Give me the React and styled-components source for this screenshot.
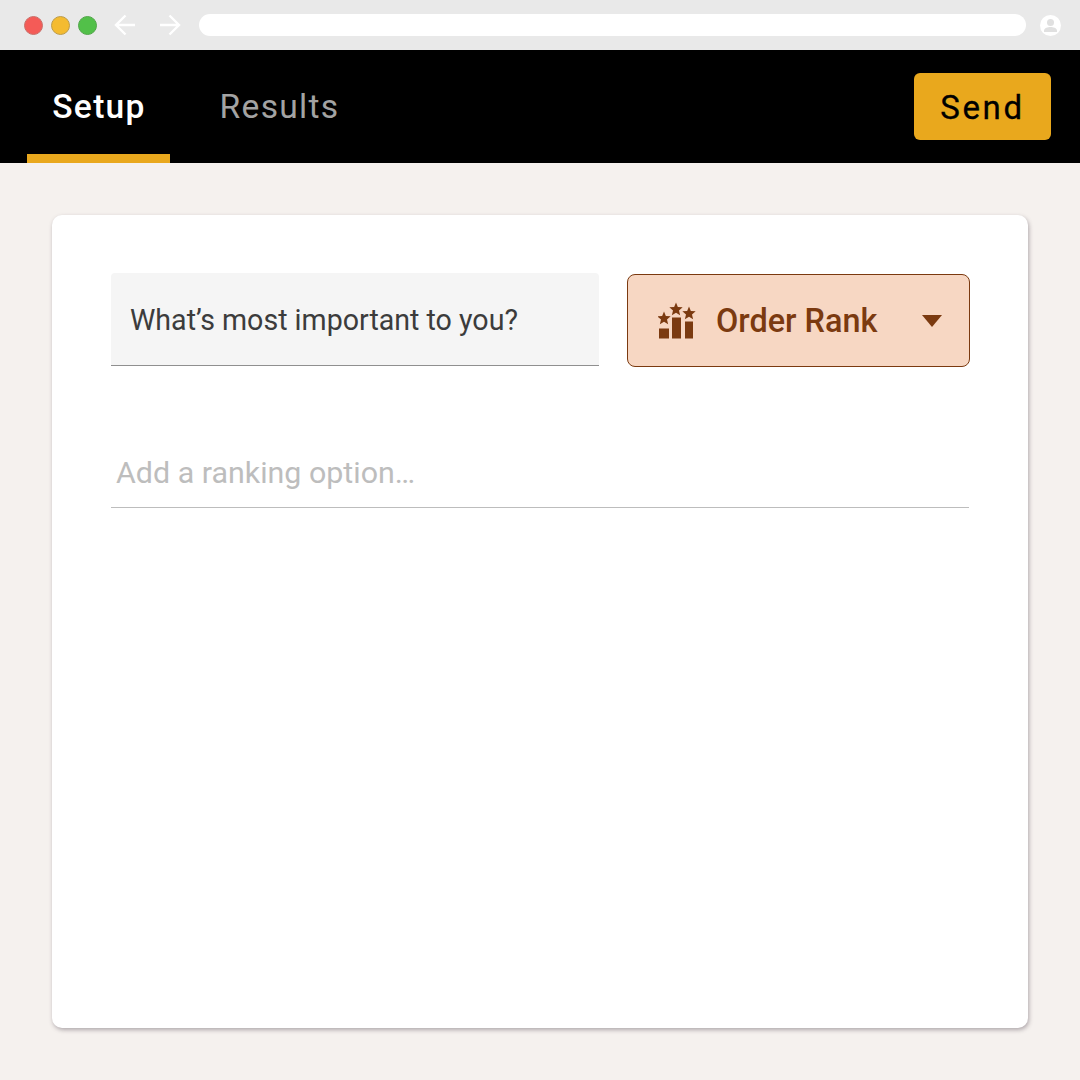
import React from 'react'
import styled, { createGlobalStyle } from 'styled-components'

const GlobalStyle = createGlobalStyle`
    html, body {
        margin: 0;
        padding: 0;
        background: #f5f1ee;
        font-family: Roboto, "Liberation Sans", sans-serif;
    }
`

const Page = styled.div`
    width: 1080px;
    height: 1080px;
    display: flex;
    flex-direction: column;
    overflow: hidden;
    background: #f5f1ee;
`

const BrowserBar = styled.div`
    height: 50px;
    display: flex;
    align-items: center;
    padding: 0 19px 0 24px;
    box-sizing: border-box;
    background: #e9e9e9;
`

const Dot = styled.span`
    width: 19px;
    height: 19px;
    margin-right: 8px;
    border-radius: 50%;
    box-sizing: border-box;
    background: ${({ $color }) => $color};
    border: 1px solid ${({ $edge }) => $edge};
`

const NavArrows = styled.div`
    display: flex;
    gap: 23px;
    margin: 0 18px 0 9px;
`

const UrlBar = styled.div`
    flex: 1;
    height: 22px;
    border-radius: 11px;
    background: #fff;
`

const Account = styled.svg`
    width: 21px;
    height: 21px;
    margin-left: 14px;
`

const Header = styled.header`
    height: 113px;
    display: flex;
    justify-content: space-between;
    align-items: center;
    padding: 0 29px 0 27px;
    box-sizing: border-box;
    background: #000;
`

const Tabs = styled.nav`
    height: 100%;
    display: flex;
    gap: 25px;
`

const Tab = styled.div`
    width: ${({ $width }) => $width}px;
    height: 100%;
    display: flex;
    justify-content: center;
    align-items: center;
    padding: 8px 0 0 1px;
    box-sizing: border-box;
    font-size: 33.6px;
    font-weight: ${({ $active }) => ($active ? 500 : 400)};
    letter-spacing: 1.3px;
    color: ${({ $active }) => ($active ? '#fff' : '#a3a3a3')};
    border-bottom: 9px solid ${({ $active }) => ($active ? '#e9a81d' : 'transparent')};
`

const SendButton = styled.button`
    width: 137px;
    height: 67px;
    padding: 2px 0 0;
    border: none;
    border-radius: 6px;
    background: #e9a81d;
    color: #000;
    font-family: inherit;
    font-size: 33px;
    font-weight: 400;
    letter-spacing: 2.6px;
    -webkit-text-stroke: 0.3px #000;
`

const Content = styled.main`
    flex: 1;
    padding: 52px 52px;
`

const Card = styled.section`
    height: 813px;
    padding: 58px 59px;
    box-sizing: border-box;
    border-radius: 10px;
    background: #fff;
    box-shadow: 1px 2px 4px rgba(90, 80, 90, 0.45);
`

const TopRow = styled.div`
    display: flex;
    gap: 28px;
`

const Question = styled.div`
    flex: none;
    width: 488px;
    height: 93px;
    display: flex;
    align-items: center;
    padding: 2px 0 0 19px;
    box-sizing: border-box;
    border-radius: 4px 4px 0 0;
    border-bottom: 1px solid #8f8f8f;
    background: #f5f5f5;
    color: #3c3c3c;
    font-size: 28.6px;
`

const TypeSelect = styled.div`
    flex: none;
    width: 343px;
    height: 93px;
    margin-top: 1px;
    display: flex;
    align-items: center;
    padding: 0 27px 0 30px;
    box-sizing: border-box;
    border: 1px solid #7b3a10;
    border-radius: 8px;
    background: #f7d7c3;
    color: #7b3a10;
    font-size: 32.4px;
    font-weight: 500;
`

const RankIcon = styled.svg`
    width: 38px;
    height: 38px;
    margin-right: 20px;
    fill: #7b3a10;
`

const TypeLabel = styled.span`
    flex: 1;
`

const Caret = styled.span`
    width: 0;
    height: 0;
    border-left: 10px solid transparent;
    border-right: 10px solid transparent;
    border-top: 12px solid #7b3a10;
`

const OptionInput = styled.div`
    height: 70px;
    margin-top: 71px;
    display: flex;
    align-items: center;
    padding-left: 5px;
    box-sizing: border-box;
    border-bottom: 1px solid #bdbdbd;
    color: #bdbdbd;
    font-size: 30.4px;
`

const Arrow = ({ flip }) => (
    <svg width="22" height="22" viewBox="0 0 22 22" fill="none" stroke="#fff" strokeWidth="2.4" style={flip ? { transform: 'scaleX(-1)' } : undefined}>
        <path d="M21 11H2M11.500 1.500L2 11l9.500 9.500" />
    </svg>
)

const star = (cx, cy, r) => {
    const pts = []
    for (let i = 0; i < 10; i++) {
        const rad = i % 2 ? r * 0.45 : r
        const a = (Math.PI / 5) * i - Math.PI / 2
        pts.push(`${(cx + rad * Math.cos(a)).toFixed(2)},${(cy + rad * Math.sin(a)).toFixed(2)}`)
    }
    return pts.join(' ')
}

const App = () => (
    <>
        <GlobalStyle />
        <Page>
            <BrowserBar>
                <Dot $color="#f45b57" $edge="#c9706a" />
                <Dot $color="#f4bb30" $edge="#bd9c4a" />
                <Dot $color="#52c049" $edge="#52a64a" />
                <NavArrows>
                    <Arrow />
                    <Arrow flip />
                </NavArrows>
                <UrlBar />
                <Account viewBox="0 0 21 21">
                    <circle cx="10.500" cy="10.500" r="10.500" fill="#fff" />
                    <circle cx="10.500" cy="7.500" r="3.500" fill="#e0e0e0" />
                    <path d="M4 15.500c0-2.500 4-3.500 6.500-3.500s6.500 1 6.500 3.500V17H4z" fill="#e0e0e0" />
                </Account>
            </BrowserBar>
            <Header>
                <Tabs>
                    <Tab $active $width={143}>Setup</Tab>
                    <Tab $width={168}>Results</Tab>
                </Tabs>
                <SendButton>Send</SendButton>
            </Header>
            <Content>
                <Card>
                    <TopRow>
                        <Question>What’s most important to you?</Question>
                        <TypeSelect>
                            <RankIcon viewBox="0 0 38 38">
                                <polygon points={star(6, 16.5, 7)} />
                                <polygon points={star(18, 7.5, 7)} />
                                <polygon points={star(31, 11.5, 7)} />
                                <rect x="1" y="26.500" width="10" height="10" />
                                <rect x="14" y="15.500" width="9" height="21" />
                                <rect x="27" y="19.500" width="8" height="17" />
                            </RankIcon>
                            <TypeLabel>Order Rank</TypeLabel>
                            <Caret />
                        </TypeSelect>
                    </TopRow>
                    <OptionInput>Add a ranking option…</OptionInput>
                </Card>
            </Content>
        </Page>
    </>
)

export default App
